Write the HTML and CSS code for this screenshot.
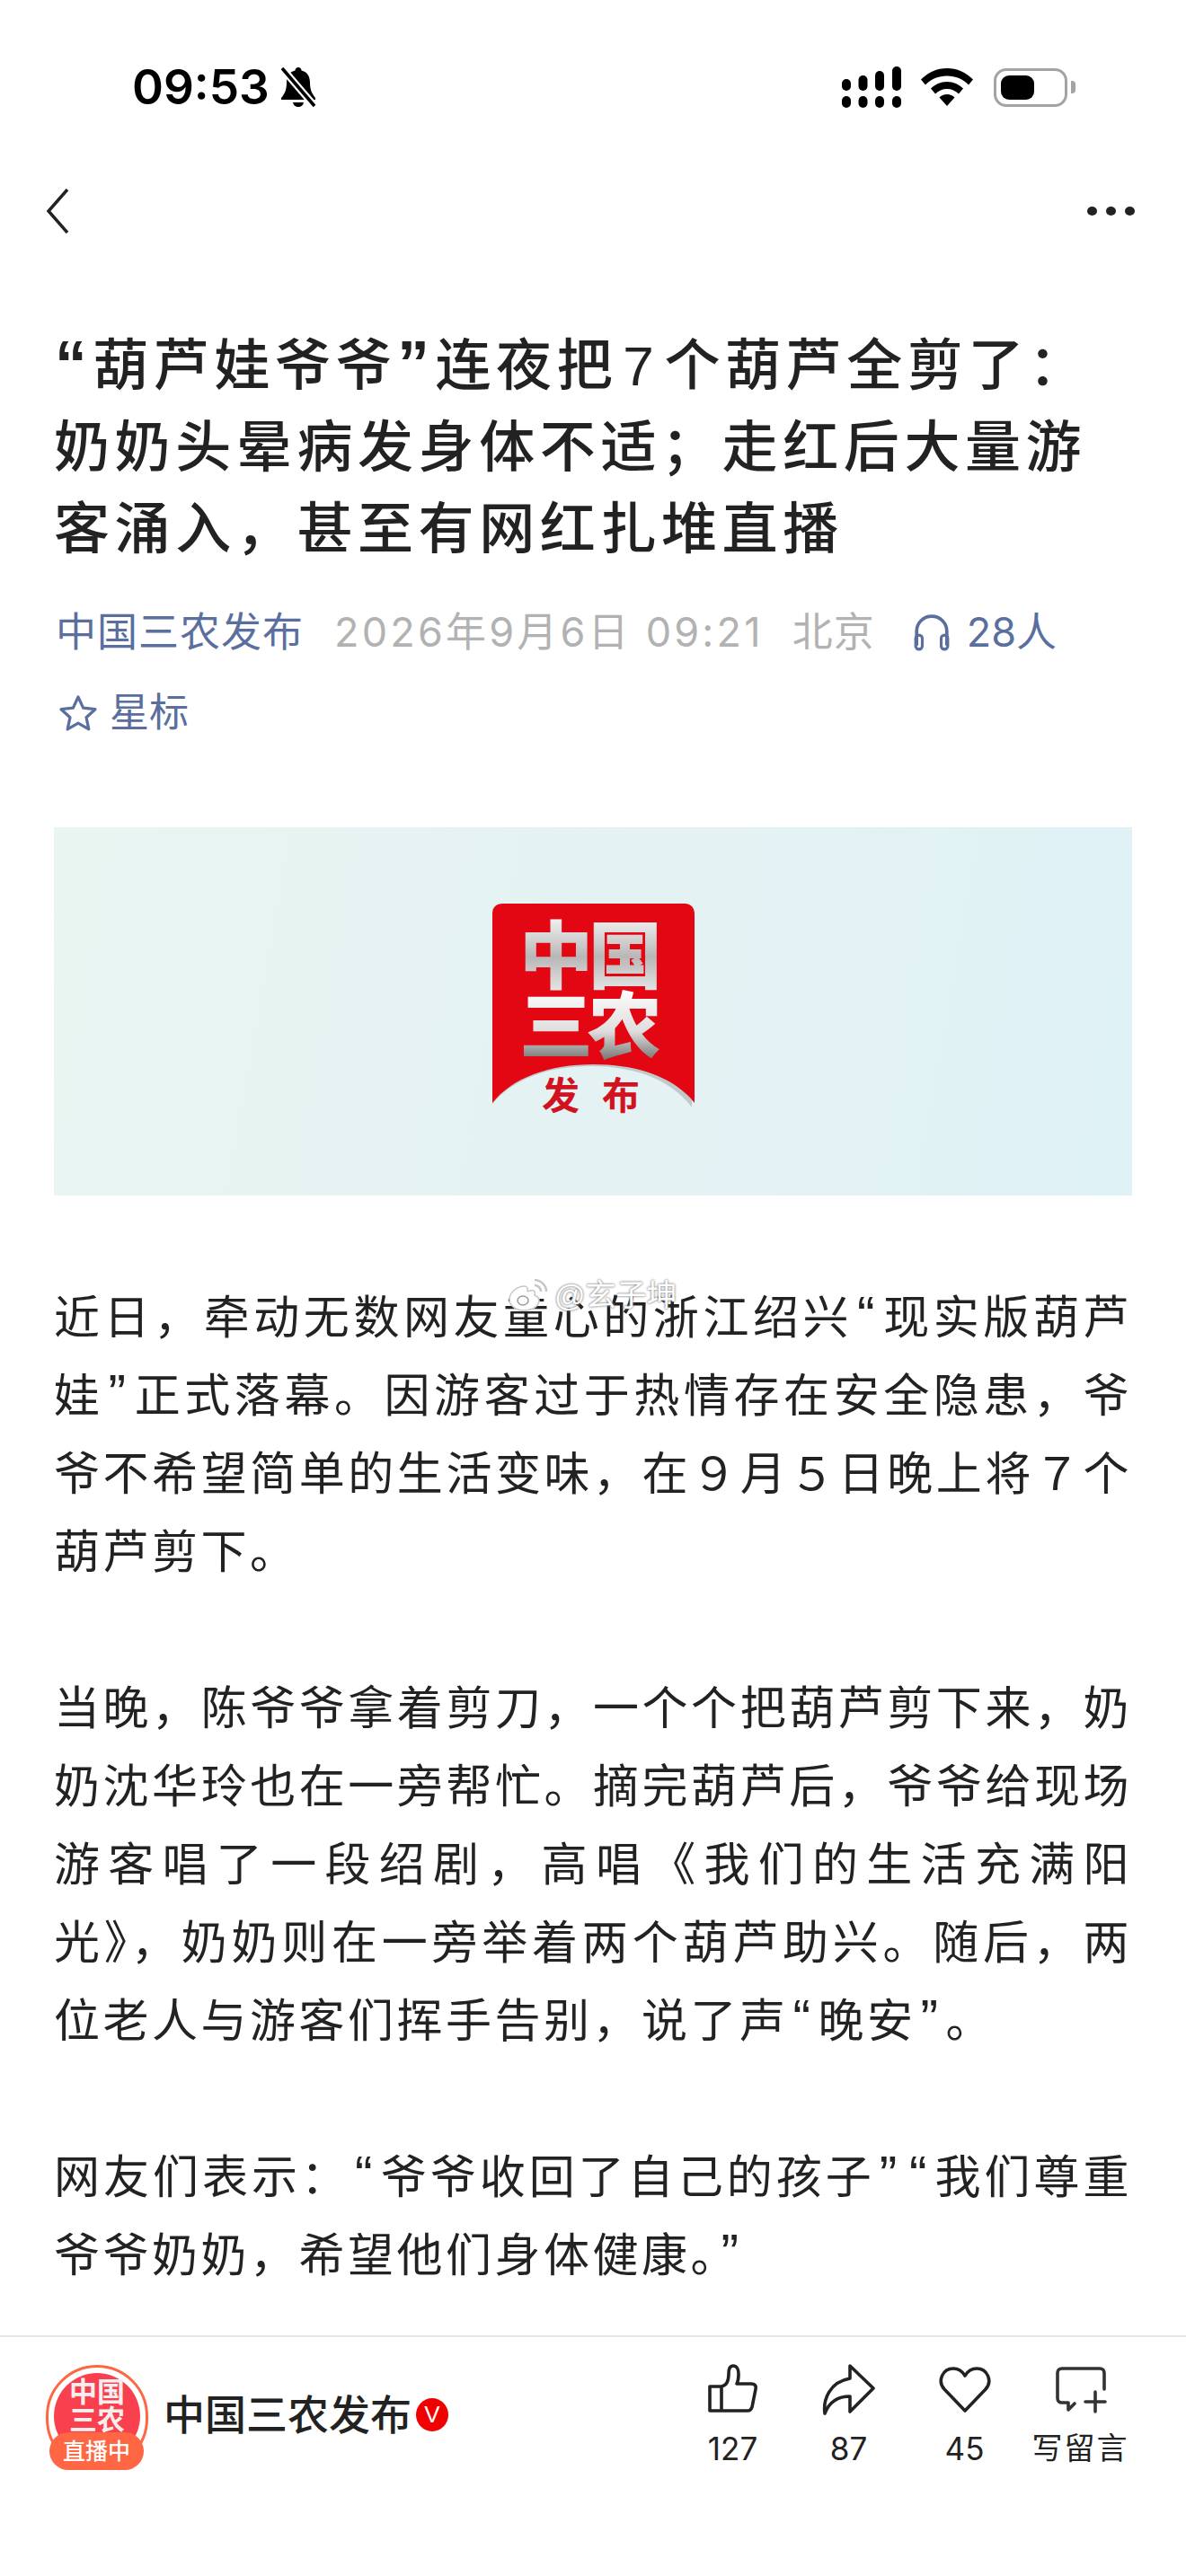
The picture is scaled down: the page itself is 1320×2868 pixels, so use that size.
FILE: index.html
```html
<!DOCTYPE html>
<html lang="zh-CN">
<head>
    <meta charset="UTF-8">
    <meta name="viewport" content="width=device-width, initial-scale=1.0">
    <title>中国三农发布</title>
    <link rel="stylesheet" href="styles.css">
</head>
<body>
    <div class="page">
        <div class="status">
            <div class="status-left">
                <span class="clock">09:53</span>
                <svg class="bell" viewBox="0 0 42 46">
                    <path d="M21 1c2 0 3.500 1.500 3.500 3.500C31 6 34 11 34 18c0 8 2 12 6 17v2H2v-2c4-5 6-9 6-17C8 11 11 6 17.500 4.500 17.500 2.500 19 1 21 1z" fill="#000"/>
                    <path d="M15 40h12c-.5 3-3 5-6 5s-5.500-2-6-5z" fill="#000"/>
                    <path d="M3 2l36 42" stroke="#fff" stroke-width="8"/>
                    <path d="M3 2l36 42" stroke="#000" stroke-width="3.500"/>
                </svg>
            </div>
            <div class="status-right">
                <svg class="signal" viewBox="0 0 66 46" fill="#000">
                    <rect x="0" y="14" width="10" height="13" rx="5"/>
                    <rect x="18.500" y="10" width="10" height="17" rx="5"/>
                    <rect x="37" y="5" width="10" height="22" rx="5"/>
                    <rect x="56" y="0" width="10" height="27" rx="5"/>
                    <rect x="0" y="33" width="10" height="13" rx="5"/>
                    <rect x="18.500" y="33" width="10" height="13" rx="5"/>
                    <rect x="37" y="33" width="10" height="13" rx="5"/>
                    <rect x="56" y="33" width="10" height="13" rx="5"/>
                </svg>
                <svg class="wifi" viewBox="0 0 58 42" fill="#000">
                    <path d="M29 0c11 0 21 4.500 29 12.500l-5 6C47 12 38.500 8.500 29 8.500S11 12 5 18.500l-5-6C8 4.500 18 0 29 0z"/>
                    <path d="M29 15c7 0 13.500 3 18 7.500l-5 6c-3.500-3.500-8-5.500-13-5.500s-9.500 2-13 5.500l-5-6C15.500 18 22 15 29 15z"/>
                    <path d="M29 29c3.500 0 6.500 1.200 8.500 3.500L29 42l-8.500-9.500C22.500 30.200 25.500 29 29 29z"/>
                </svg>
                <div class="battery"><div class="battery-fill"></div></div>
                <div class="battery-tip"></div>
            </div>
        </div>

        <div class="nav">
            <svg class="back" viewBox="0 0 26 50"><path d="M24 1L3 25l21 24" fill="none" stroke="#222" stroke-width="3.500"/></svg>
            <div class="more"><i></i><i></i><i></i></div>
        </div>

        <div class="article">
            <h1 class="title"><span class="q">“</span>葫芦娃爷爷<span class="q">”</span>连夜把<span class="num">7</span>个葫芦全剪了：奶奶头晕病发身体不适；走红后大量游客涌入，甚至有网红扎堆直播</h1>

            <div class="meta">
                <span class="link source">中国三农发布</span>
                <span class="date">2026年9月6日 09:21</span>
                <span class="place">北京</span>
                <span class="link listen">
                    <svg class="meta-icon" viewBox="0 0 40 40"><path d="M4 34V19a16 16 0 0 1 32 0v15" fill="none" stroke="#5a6f9e" stroke-width="3.500"/><rect x="3" y="23" width="7" height="15" rx="3.500" fill="none" stroke="#5a6f9e" stroke-width="3"/><rect x="30" y="23" width="7" height="15" rx="3.500" fill="none" stroke="#5a6f9e" stroke-width="3"/></svg>
                    28人
                </span>
            </div>
            <div class="star link">
                <svg class="star-icon" viewBox="0 0 44 42"><path d="M22 3l5.600 12.200 13.400 1.500-10 9 2.800 13.200L22 32.200 10.200 38.900 13 25.700l-10-9 13.400-1.500z" fill="none" stroke="#5a6f9e" stroke-width="3.200" stroke-linejoin="round"/></svg>
                星标
            </div>

            <div class="banner">
                <svg class="logo" viewBox="0 0 225 250">
                    <defs>
                        <linearGradient id="metal" x1="0" y1="0" x2="0" y2="1">
                            <stop offset="0" stop-color="#f4f4f4"/>
                            <stop offset="0.5" stop-color="#b9b6b6"/>
                            <stop offset="1" stop-color="#eeeeee"/>
                        </linearGradient>
                        <linearGradient id="metal2" x1="0" y1="0" x2="0" y2="1">
                            <stop offset="0" stop-color="#ffffff"/>
                            <stop offset="0.55" stop-color="#e0dede"/>
                            <stop offset="1" stop-color="#5b5757"/>
                        </linearGradient>
                    </defs>
                    <path d="M0 224V12C0 4 4 0 12 0h201c8 0 12 4 12 12v212c-22-30-62-46-112-46S22 194 0 224z" fill="#8d8d93" opacity="0.4" transform="translate(-3 3)"/>
                    <path d="M0 222V12C0 4 4 0 12 0h201c8 0 12 4 12 12v210c-22-28-62-43-112-43S22 194 0 222z" fill="#e30613"/>
                    <text class="logo-big" x="30" y="88" fill="url(#metal)">中</text>
                    <text class="logo-big" x="107" y="88" fill="url(#metal)">国</text>
                    <text class="logo-big" x="30" y="166" fill="url(#metal2)">三</text>
                    <text class="logo-big" x="106" y="166" fill="url(#metal2)">农</text>
                    <text class="logo-small" x="55" y="229" fill="#d3121f">发</text>
                    <text class="logo-small" x="122" y="229" fill="#d3121f">布</text>
                </svg>
            </div>

            <div class="body-text">
                <div class="watermark">
                    <svg class="wm-icon" viewBox="0 0 46 36"><path d="M19 8C10 8 2 15 2 23c0 7 8 12 16 12 11 0 17-6 17-11 0-4-3-5-5-6 1-3 0-7-5-5-2 1-3 1-3 0 1-3-1-5-3-5z" fill="#fff" stroke="#c6c6c6" stroke-width="1.500"/><ellipse cx="17" cy="24" rx="6" ry="5" fill="none" stroke="#9a9a9a" stroke-width="1.500"/><path d="M30 1c7 0 13 6 13 13M30 7c4 0 7 3 7 7" fill="none" stroke="#c6c6c6" stroke-width="2.500"/></svg>
                    <span class="wm-text">@玄子坤</span>
                </div>
                <p>近日，牵动无数网友童心的浙江绍兴<span class="q">“</span>现实版葫芦娃<span class="q">”</span>正式落幕。因游客过于热情存在安全隐患，爷爷不希望简单的生活变味，在９月５日晚上将７个葫芦剪下。</p>
                <p>当晚，陈爷爷拿着剪刀，一个个把葫芦剪下来，奶奶沈华玲也在一旁帮忙。摘完葫芦后，爷爷给现场游客唱了一段绍剧，高唱《我们的生活充满阳光》，奶奶则在一旁举着两个葫芦助兴。随后，两位老人与游客们挥手告别，说了声<span class="q">“</span>晚安<span class="q">”</span>。</p>
                <p>网友们表示：<span class="q">“</span>爷爷收回了自己的孩子<span class="q">”</span><span class="q">“</span>我们尊重爷爷奶奶，希望他们身体健康。<span class="q">”</span></p>
            </div>
        </div>

        <div class="footer">
            <div class="author">
                <div class="avatar">
                    <div class="avatar-inner">中国<br>三农</div>
                    <div class="live">直播中</div>
                </div>
                <span class="author-name">中国三农发布</span>
                <span class="vip">V</span>
            </div>
            <div class="actions">
                <div class="action">
                    <svg class="action-icon" viewBox="0 0 60 60"><path d="M4 27h13c5-1 8-6 8-14 0-5 1-9 5-9s6 4 6 9c0 5-1 9-2 11h16c4 0 6 2 5 6l-4 20c-1 3-2 4-5 4H4z M17 27v27" fill="none" stroke="#222" stroke-width="3.600" stroke-linejoin="round"/></svg>
                    <span>127</span>
                </div>
                <div class="action">
                    <svg class="action-icon" viewBox="0 0 60 60"><path d="M3 57C1 42 8 22 31 18V4l26 25-26 26V38C18 38 8 44 3 57z" fill="none" stroke="#222" stroke-width="3.600" stroke-linejoin="round"/></svg>
                    <span>87</span>
                </div>
                <div class="action">
                    <svg class="action-icon" viewBox="0 0 60 60"><path d="M30 54L7 30C-1 21 5 7 17 7c6 0 10 3 13 8 3-5 7-8 13-8 12 0 18 14 10 23z" fill="none" stroke="#222" stroke-width="3.600" stroke-linejoin="round"/></svg>
                    <span>45</span>
                </div>
                <div class="action">
                    <svg class="action-icon" viewBox="0 0 60 60"><path d="M56 30V12c0-3-2-5-5-5H9c-3 0-5 2-5 5v28c0 3 2 5 5 5h7v8l7-7" fill="none" stroke="#333" stroke-width="3.600" stroke-linecap="round" stroke-linejoin="round"/><path d="M35 44h22M46 33v22" fill="none" stroke="#333" stroke-width="3.600" stroke-linecap="round"/></svg>
                    <span class="action-cjk">写留言</span>
                </div>
            </div>
        </div>
    </div>
</body>
</html>
```

FILE: styles.css
```css
* {
    box-sizing: border-box;
}
body {
    margin: 0;
    background-color: #ffffff;
    font-family: "Liberation Sans", "Noto Sans CJK SC", sans-serif;
    color: #222222;
}
.page {
    display: flex;
    flex-direction: column;
    width: 1320px;
    height: 2868px;
    overflow: hidden;
}

/* status bar */
.status {
    display: flex;
    justify-content: space-between;
    align-items: center;
    height: 46px;
    margin-top: 74px;
    padding: 0 123px 0 147px;
}
.status-left {
    display: flex;
    align-items: center;
    gap: 11px;
}
.clock {
    font-family: "Inter", sans-serif;
    font-size: 53px;
    font-weight: 600;
    line-height: 46px;
    color: #000000;
}
.bell {
    width: 42px;
    height: 46px;
}
.status-right {
    display: flex;
    align-items: center;
}
.signal {
    width: 66px;
    height: 46px;
    margin-right: 22px;
}
.wifi {
    width: 58px;
    height: 42px;
    margin-right: 23px;
}
.battery {
    width: 82px;
    height: 43px;
    padding: 5px;
    border: 3px solid #a3a3a3;
    border-radius: 14px;
}
.battery-fill {
    width: 37px;
    height: 100%;
    background-color: #000000;
    border-radius: 9px;
}
.battery-tip {
    width: 5px;
    height: 14px;
    margin-left: 4px;
    background-color: #a3a3a3;
    border-radius: 0 4px 4px 0;
}

/* nav */
.nav {
    display: flex;
    justify-content: space-between;
    align-items: center;
    height: 50px;
    margin-top: 90px;
    padding: 0 57px 0 51px;
}
.back {
    width: 26px;
    height: 50px;
}
.more {
    display: flex;
    gap: 10px;
}
.more i {
    width: 11px;
    height: 10px;
    background-color: #222222;
    border-radius: 50%;
}

/* article */
.article {
    flex: 1;
    min-height: 0;
    padding: 0 60px;
}
.title {
    margin: 102px 0 0;
    font-size: 62px;
    font-weight: 500;
    line-height: 91px;
    letter-spacing: 5.600px;
    color: #222222;
}
.q {
    padding: 0 1px;
    font-size: 1.15em;
    font-weight: 700;
    line-height: 0;
}
.num {
    padding: 0 6px;
}
.meta {
    display: flex;
    align-items: center;
    margin-top: 40px;
    padding-left: 2px;
    font-family: "Inter", "Noto Sans CJK SC", sans-serif;
    font-size: 45px;
    line-height: 58px;
    color: #b2b2b2;
}
.link {
    color: #5a6f9e;
}
.source {
    letter-spacing: 1px;
}
.date {
    margin-left: 34px;
    letter-spacing: 3.200px;
}
.place {
    margin-left: 32px;
    letter-spacing: 1px;
}
.listen {
    display: flex;
    align-items: center;
    gap: 18px;
    margin-left: 42px;
}
.meta-icon {
    width: 42px;
    height: 42px;
}
.star {
    display: flex;
    align-items: center;
    gap: 12px;
    margin-top: 32px;
    padding-left: 4px;
    font-size: 44px;
    line-height: 58px;
}
.star-icon {
    width: 46px;
    height: 42px;
}
.banner {
    display: flex;
    justify-content: center;
    align-items: flex-start;
    height: 410px;
    margin-top: 98px;
    padding-top: 85px;
    background: linear-gradient(100deg, #e8f5f1 0%, #e5f2f3 50%, #dff2f6 100%);
}
.logo {
    width: 225px;
    height: 250px;
}
.logo-big {
    font-size: 82px;
    font-weight: 900;
}
.logo-small {
    font-size: 42px;
    font-weight: 700;
}
.body-text {
    position: relative;
    margin-top: 93px;
    font-size: 51px;
    line-height: 87px;
    letter-spacing: 3.500px;
    text-align: justify;
    color: #222222;
}
.body-text p {
    margin: 0 0 87px;
}
.body-text .q {
    padding: 0 5px;
    font-weight: 400;
}
.watermark {
    position: absolute;
    left: 505px;
    top: 0;
    display: flex;
    align-items: center;
    gap: 6px;
    height: 36px;
    z-index: 2;
}
.wm-icon {
    width: 46px;
    height: 36px;
}
.wm-text {
    font-size: 34px;
    line-height: 36px;
    letter-spacing: 0;
    color: #ffffff;
    text-shadow: 0 0 3px #8a8a8a, 0 0 2px #8a8a8a;
}

/* footer */
.footer {
    display: flex;
    flex-shrink: 0;
    justify-content: space-between;
    align-items: flex-start;
    height: 268px;
    padding: 31px 53px 0 51px;
    border-top: 2px solid #e6e6e6;
}
.author {
    display: flex;
    align-items: center;
    height: 117px;
}
.avatar {
    position: relative;
    width: 114px;
    height: 117px;
    border: 3px solid #ff6644;
    border-radius: 57px;
    padding: 6px;
}
.avatar-inner {
    height: 96px;
    padding-top: 6px;
    background-color: #f8404f;
    border-radius: 50%;
    font-size: 31px;
    font-weight: 700;
    line-height: 31px;
    text-align: center;
    color: #f6eeee;
}
.live {
    position: absolute;
    left: 1px;
    bottom: -3px;
    width: 105px;
    height: 42px;
    background-color: #ff6644;
    border-radius: 21px;
    font-size: 25px;
    font-weight: 500;
    line-height: 42px;
    text-align: center;
    color: #ffffff;
}
.author-name {
    margin: 0 0 6px 17px;
    font-size: 46px;
    font-weight: 500;
    line-height: 60px;
    color: #222222;
}
.vip {
    width: 36px;
    height: 37px;
    margin: 0 0 6px 5px;
    background-color: #f00000;
    border-radius: 50%;
    font-size: 26px;
    font-weight: 500;
    line-height: 37px;
    text-align: center;
    color: #ffffff;
}
.actions {
    display: flex;
    margin-top: -3px;
}
.action {
    display: flex;
    flex-direction: column;
    align-items: center;
    width: 129px;
    font-family: "Inter", "Noto Sans CJK SC", sans-serif;
    font-size: 35px;
    line-height: 50px;
    color: #222222;
}
.action-icon {
    width: 60px;
    height: 60px;
    margin-bottom: 11px;
}
.action-cjk {
    font-size: 34px;
    letter-spacing: 2px;
    white-space: nowrap;
}
```
